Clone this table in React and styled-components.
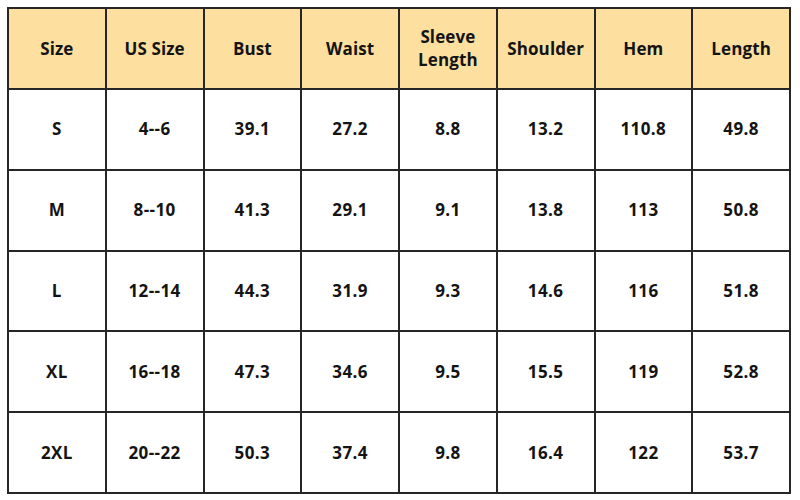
import React from "react";
import styled, { createGlobalStyle } from "styled-components";

const Global = createGlobalStyle`
  html, body { margin: 0; padding: 0; background: #ffffff; }
  body { font-family: "Open Sans", "Liberation Sans", sans-serif; }
`;

const Page = styled.div`
  padding: 7px 0 0 7px;
`;

const Table = styled.div`
  width: 784px;
  height: 487px;
  box-sizing: border-box;
  display: grid;
  grid-template-columns: repeat(8, 1fr);
  grid-template-rows: repeat(6, 1fr);
  gap: 2px;
  padding: 2px;
  background: #262626;
`;

const Cell = styled.div`
  display: flex;
  align-items: center;
  justify-content: center;
  text-align: center;
  background: ${(p) => (p.$head ? "#fde0a0" : "#ffffff")};
  color: #141414;
  font-family: "Open Sans", "Liberation Sans", sans-serif;
  font-weight: 700;
  font-size: 17px;
  line-height: 1.4;
  letter-spacing: ${(p) => (p.$head ? "0.1px" : "0.4px")};
`;

const headers = ["Size", "US Size", "Bust", "Waist", "Sleeve\nLength", "Shoulder", "Hem", "Length"];
const rows = [
  ["S", "4--6", "39.1", "27.2", "8.8", "13.2", "110.8", "49.8"],
  ["M", "8--10", "41.3", "29.1", "9.1", "13.8", "113", "50.8"],
  ["L", "12--14", "44.3", "31.9", "9.3", "14.6", "116", "51.8"],
  ["XL", "16--18", "47.3", "34.6", "9.5", "15.5", "119", "52.8"],
  ["2XL", "20--22", "50.3", "37.4", "9.8", "16.4", "122", "53.7"],
];

export default function App() {
  return (
    <>
      <Global />
      <Page>
        <Table>
          {headers.map((h) => (
            <Cell key={h} $head>
              <span>
                {h.split("\n").map((line, i) => (
                  <React.Fragment key={i}>
                    {i > 0 && <br />}
                    {line}
                  </React.Fragment>
                ))}
              </span>
            </Cell>
          ))}
          {rows.map((r, ri) =>
            r.map((v, ci) => <Cell key={`${ri}-${ci}`}>{v}</Cell>)
          )}
        </Table>
      </Page>
    </>
  );
}
